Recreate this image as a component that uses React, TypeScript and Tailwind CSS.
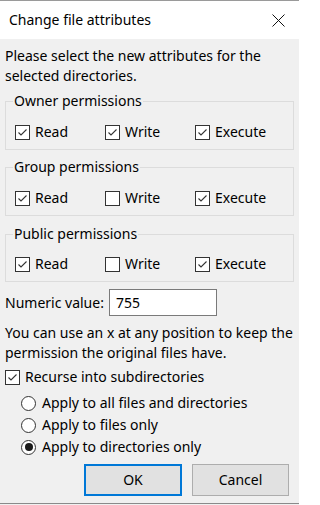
import React from "react";

const font = { fontFamily: '"Noto Sans", "Segoe UI", Arial, sans-serif' };

function Check({ checked }: { checked: boolean }) {
  return (
    <span className="w-[15px] h-[15px] border border-[#333333] bg-white flex items-center justify-center shrink-0">
      {checked && (
        <svg width="13" height="13" viewBox="0 0 13 13">
          <path d="M2.5 6.5 L5 9 L10.5 3.5" fill="none" stroke="#333333" strokeWidth="1.1" />
        </svg>
      )}
    </span>
  );
}

function Radio({ checked }: { checked: boolean }) {
  return (
    <span className="w-[15px] h-[15px] rounded-full border border-[#333333] bg-white flex items-center justify-center shrink-0">
      {checked && <span className="w-[8px] h-[8px] rounded-full bg-[#1a1a1a]" />}
    </span>
  );
}

function CheckItem({ checked, label, w = "w-[90px]" }: { checked: boolean; label: string; w?: string }) {
  return (
    <div className={`flex items-center gap-[5px] h-[20px] ${w}`}>
      <Check checked={checked} />
      <span>{label}</span>
    </div>
  );
}

function Group({ title, perms, pt, mt }: { title: string; perms: [boolean, boolean, boolean]; pt: string; mt: string }) {
  return (
    <fieldset className={`border border-[#dcdcdc] mx-0 px-[9px] pb-[7px] ${mt}`}>
      <legend className="ml-[-2px] px-[1px] leading-[20px]">{title}</legend>
      <div className={`flex ${pt}`}>
        <CheckItem checked={perms[0]} label="Read" />
        <CheckItem checked={perms[1]} label="Write" />
        <CheckItem checked={perms[2]} label="Execute" w="w-auto" />
      </div>
    </fieldset>
  );
}

export default function App() {
  return (
    <div
      className="w-[299px] h-[505px] bg-[#f0f0f0] flex flex-col text-[14px] leading-[20px] text-black border-t border-[#9a9a9a] overflow-hidden"
      style={font}
    >
      <div className="h-[38px] bg-white flex items-center justify-between pl-[9px] pr-[14px] shrink-0">
        <span className="text-[14px]">Change file attributes</span>
        <svg width="13" height="13" viewBox="0 0 13 13">
          <path d="M0.5 0.5 L12.5 12.5 M12.5 0.5 L0.5 12.5" stroke="#111" strokeWidth="1" />
        </svg>
      </div>
      <div className="flex-1 flex flex-col px-[5px]">
        <p className="mt-[7px]">
          Please select the new attributes for the
          <br />
          selected directories.
        </p>
        <div className="mt-[5px] flex flex-col">
          <Group title="Owner permissions" perms={[true, true, true]} pt="pt-[11px]" mt="mt-0" />
          <Group title="Group permissions" perms={[true, false, true]} pt="pt-[11px]" mt="mt-[7px]" />
          <Group title="Public permissions" perms={[true, false, true]} pt="pt-[10px]" mt="mt-[8px]" />
        </div>
        <div className="mt-[7px] flex items-center gap-[5px]">
          <span>Numeric value:</span>
          <div className="w-[108px] h-[27px] border border-[#7a7a7a] bg-white flex items-center pl-[6px]">755</div>
        </div>
        <p className="mt-[7px] whitespace-nowrap">
          You can use an x at any position to keep the
          <br />
          permission the original files have.
        </p>
        <div className="mt-[4px] flex items-center gap-[5px] h-[20px]">
          <Check checked={true} />
          <span>Recurse into subdirectories</span>
        </div>
        <div className="mt-[5px] pl-[16px] flex flex-col">
          {[
            ["Apply to all files and directories", false],
            ["Apply to files only", false],
            ["Apply to directories only", true],
          ].map(([label, c]) => (
            <div key={label as string} className="h-[22px] flex items-center gap-[6px]">
              <Radio checked={c as boolean} />
              <span>{label as string}</span>
            </div>
          ))}
        </div>
        <div className="mt-[6px] flex justify-end gap-[10px] pr-[5px]">
          <button className="w-[98px] h-[32px] bg-[#e1e1e1] border-2 border-[#0078d7] text-[14px]">OK</button>
          <button className="w-[97px] h-[32px] bg-[#e1e1e1] border border-[#adadad] text-[14px]">Cancel</button>
        </div>
      </div>
      <div className="h-[2px] border-t border-[#8a8a8a] bg-[#f0f0f0] shrink-0" />
    </div>
  );
}
